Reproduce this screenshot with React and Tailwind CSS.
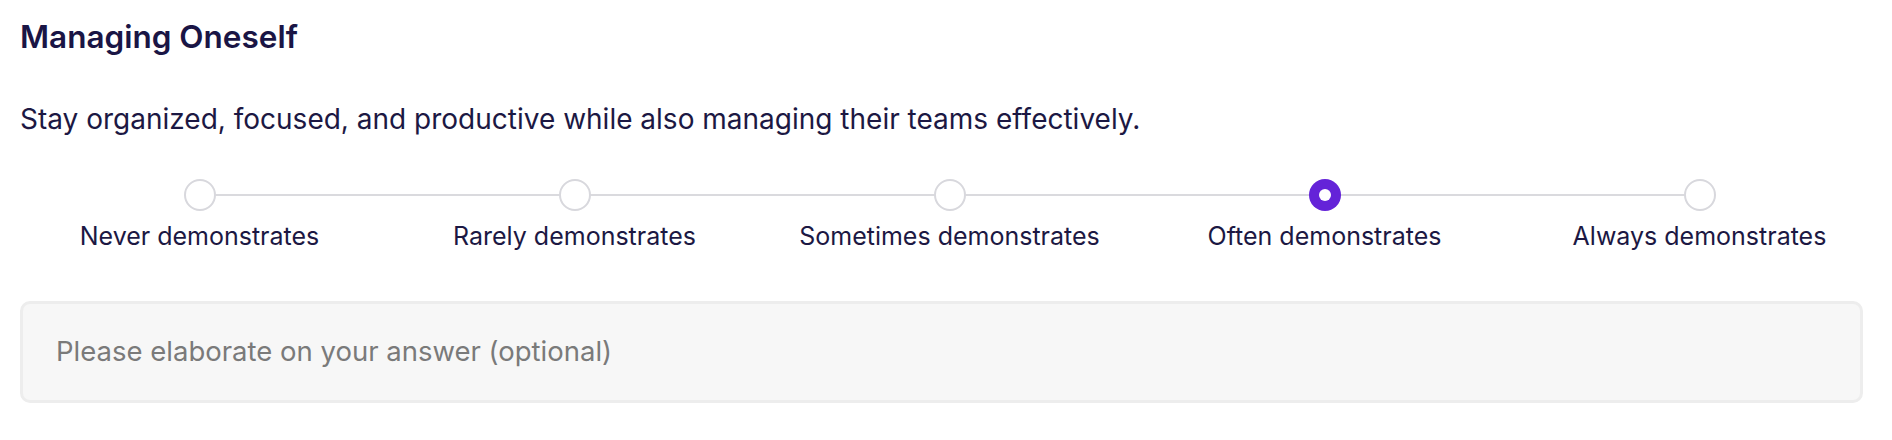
import React from "react";

const options = [
  { label: "Never demonstrates", selected: false },
  { label: "Rarely demonstrates", selected: false },
  { label: "Sometimes demonstrates", selected: false },
  { label: "Often demonstrates", selected: true },
  { label: "Always demonstrates", selected: false },
];

export default function App() {
  return (
    <div
      className="w-[1892px] h-[440px] bg-white pl-[20px] pr-[29px] pt-[19px] text-[#1c1843]"
      style={{ fontFamily: "Inter, 'Liberation Sans', sans-serif" }}
    >
      <h2 className="text-[31.5px] leading-[36px] font-semibold text-[#1a1545]">
        Managing Oneself
      </h2>
      <p className="mt-[47px] text-[28px] leading-[34px] text-[#1c1843]">
        Stay organized, focused, and productive while also managing their teams effectively.
      </p>

      <div className="relative mt-[43px] -ml-[8px] w-[1875px]">
        <div className="absolute left-[187px] right-[188px] top-[15px] h-[2px] bg-[#dadade]" />
        <div className="relative grid grid-cols-5">
          {options.map((o) => (
            <div key={o.label} className="flex flex-col items-center">
              {o.selected ? (
                <div className="w-[32px] h-[32px] rounded-full bg-[#6423d8] flex items-center justify-center">
                  <div className="w-[12px] h-[12px] rounded-full bg-white" />
                </div>
              ) : (
                <div className="w-[32px] h-[32px] rounded-full bg-white border-2 border-[#d8d8dd]" />
              )}
              <div className="mt-[9px] text-[25px] leading-[32px] whitespace-nowrap text-[#1c1843]">
                {o.label}
              </div>
            </div>
          ))}
        </div>
      </div>

      <textarea
        className="mt-[49px] block w-[1843px] h-[102px] resize-none rounded-[10px] border-[3px] border-[#ededed] bg-[#f7f7f7] pl-[33px] pt-[30px] text-[27.5px] leading-[34px] outline-none placeholder:text-[#7a7a7a]"
        placeholder="Please elaborate on your answer (optional)"
        style={{ fontFamily: "Inter, 'Liberation Sans', sans-serif" }}
      />
    </div>
  );
}
